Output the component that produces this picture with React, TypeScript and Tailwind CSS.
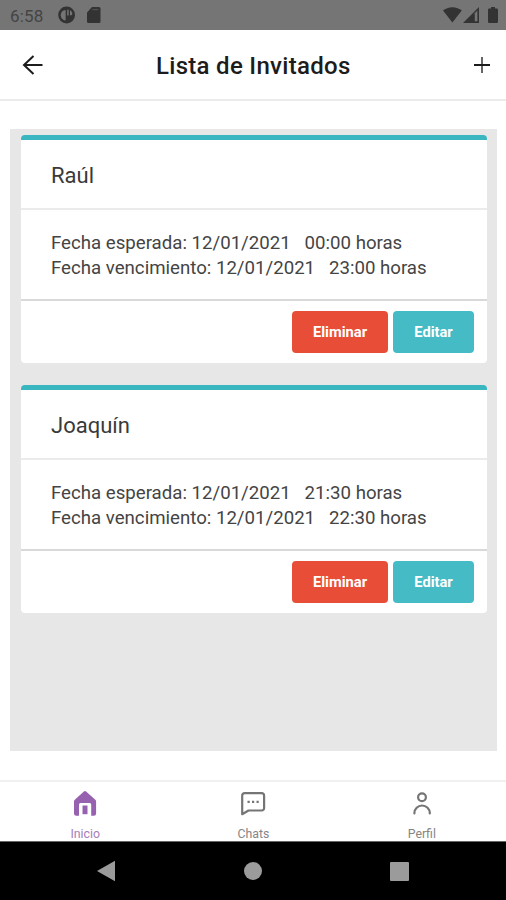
import React, { useState } from "react";

interface Guest {
  id: number;
  name: string;
  expected: { date: string; time: string };
  expires: { date: string; time: string };
}

const guests: Guest[] = [
  {
    id: 1,
    name: "Raúl",
    expected: { date: "12/01/2021", time: "00:00" },
    expires: { date: "12/01/2021", time: "23:00" },
  },
  {
    id: 2,
    name: "Joaquín",
    expected: { date: "12/01/2021", time: "21:30" },
    expires: { date: "12/01/2021", time: "22:30" },
  },
];

function StatusBar() {
  return (
    <div className="flex h-[30px] shrink-0 items-center bg-[#757575] pl-[10px] pr-[8px]">
      <span className="w-[47px] pt-px text-[17px] leading-[30px] tracking-[0.2px] text-[#444444]">
        6:58
      </span>
      <svg width="18" height="18" viewBox="0 0 18 18" className="ml-px">
        <circle cx="8.6" cy="9" r="8.4" fill="#333333" />
        <path d="M7.6 4v10.400C4.600 14.200 2.800 12 2.800 9.200S4.600 4.200 7.600 4z" fill="#757575" />
        <path d="M9.200 3.800h1.500v5.800H9.200zM12 4.300c1.500.7 2.300 2 2.300 3.400 0 1-.9 1.700-2.300 1.700z" fill="#757575" />
      </svg>
      <svg width="14" height="16" viewBox="0 0 14 16" className="ml-[11px]">
        <path d="M5 0h7a1.5 1.5 0 0 1 1.5 1.5v13A1.5 1.5 0 0 1 12 16H1.5A1.5 1.5 0 0 1 0 14.5V5.5z" fill="#333333" />
        <path d="M5.300 2.600h6" stroke="#505050" strokeWidth="1.200" />
      </svg>
      <div className="ml-auto flex items-center">
        <svg width="19" height="16" viewBox="0 0 19 16">
          <path d="M9.4 15.5 0 3.6C2.5 1.6 5.7.3 9.4.3s6.900 1.300 9.400 3.300z" fill="#333333" />
        </svg>
        <svg width="17" height="16" viewBox="0 0 17 16" className="ml-px">
          <path d="M0 16 16 0v16z" fill="#333333" />
          <path d="M11.800 6.200 14.400 3.600v10.600h-2.600z" fill="#757575" />
        </svg>
        <svg width="10" height="16" viewBox="0 0 10 16" className="ml-[8px]">
          <path d="M3 0h4v1.600h1.800A1.200 1.200 0 0 1 10 2.800v12A1.200 1.200 0 0 1 8.800 16H1.200A1.200 1.200 0 0 1 0 14.800v-12a1.200 1.200 0 0 1 1.200-1.200H3z" fill="#333333" />
        </svg>
      </div>
    </div>
  );
}

function Header() {
  return (
    <header className="flex h-[71px] shrink-0 items-center border-b-2 border-[#ebebeb] pl-[22px] pr-[15px] text-[#1c1c1c]">
      <button type="button" aria-label="Volver">
        <svg width="21" height="20" viewBox="0 0 21 20" fill="none" stroke="currentColor" strokeWidth="2">
          <path d="M20.500 10H2M11.500 1 2 10l9.500 9" />
        </svg>
      </button>
      <h1 className="ml-[113px] mr-auto pt-[3px] text-[24px] font-medium leading-[30px] tracking-[0.3px]">
        Lista de Invitados
      </h1>
      <button type="button" aria-label="Agregar">
        <svg width="18" height="18" viewBox="0 0 18 18" fill="none" stroke="currentColor">
          <path d="M9 1v16" strokeWidth="2" stroke="#666666" />
          <path d="M1 9h16" strokeWidth="2" />
        </svg>
      </button>
    </header>
  );
}

function GuestCard({ guest }: { guest: Guest }) {
  return (
    <article className="flex h-[228px] flex-col overflow-hidden rounded-[4px] border-t-[5px] border-[#3ab6c0] bg-white">
      <h2 className="flex h-[70px] items-center border-b-2 border-[#ebebeb] pl-[30px] pt-[3px] text-[22px] text-[#3a3a3a]">
        {guest.name}
      </h2>
      <div className="flex h-[91px] flex-col justify-center whitespace-pre border-b-2 border-[#d9d9d9] pl-[30px] pt-[2px] text-[18.65px] leading-[25px] text-[#444444]">
        <p>{`Fecha esperada: ${guest.expected.date}   ${guest.expected.time} horas`}</p>
        <p>{`Fecha vencimiento: ${guest.expires.date}   ${guest.expires.time} horas`}</p>
      </div>
      <div className="flex flex-1 items-center justify-end gap-[5px] pr-[12.5px] text-[14.7px] font-bold text-white">
        <button type="button" className="h-[42px] w-[96px] rounded bg-[#e84e37]">
          Eliminar
        </button>
        <button type="button" className="h-[42px] w-[81px] rounded bg-[#44bbc5]">
          Editar
        </button>
      </div>
    </article>
  );
}

const tabs = [
  {
    id: "inicio",
    label: "Inicio",
    icon: (
      <svg width="26" height="26" viewBox="0 0 26 26">
        <path
          d="M13 0a1.500 1.500 0 0 1 1.100.5l9.200 8.300c.5.500.8 1.100.8 1.800v11.900a2.200 2.200 0 0 1-2.200 2.200h-2.700V13.500a1.500 1.500 0 0 0-1.500-1.500H8.500A1.500 1.500 0 0 0 7 13.500v11.200H4.200A2.200 2.200 0 0 1 2 22.500V10.600c0-.7.3-1.300.8-1.800L11.900.5A1.500 1.500 0 0 1 13 0z"
          fill="#9661ae"
        />
        <path d="M10.500 14.500h5v8.700h-5z" fill="#9661ae" />
      </svg>
    ),
  },
  {
    id: "chats",
    label: "Chats",
    icon: (
      <svg width="26" height="26" viewBox="0 0 26 26" fill="none" stroke="#757575">
        <path
          d="M4.500 2.200h17.300a2.300 2.300 0 0 1 2.300 2.300v12.700a2.300 2.300 0 0 1-2.300 2.300H8.500L2.200 23.200V4.500a2.300 2.300 0 0 1 2.300-2.300z"
          strokeWidth="2.200"
          strokeLinejoin="round"
        />
        <path d="M7.500 10.800h2.200M12 10.800h2.200M16.500 10.800h2.200" strokeWidth="2.200" />
      </svg>
    ),
  },
  {
    id: "perfil",
    label: "Perfil",
    icon: (
      <svg width="26" height="26" viewBox="0 0 26 26" fill="none" stroke="#757575" strokeWidth="2.200">
        <circle cx="13" cy="6.300" r="3.900" />
        <path d="M5.400 22.500v-.5a7.700 7.500 0 0 1 15.400 0v.5" strokeLinecap="round" />
      </svg>
    ),
  },
];

function TabBar() {
  const [active, setActive] = useState("inicio");

  return (
    <nav className="grid h-[61px] shrink-0 grid-cols-3 border-t-2 border-[#f0f0f0] pl-px">
      {tabs.map((tab) => (
        <button
          key={tab.id}
          type="button"
          onClick={() => setActive(tab.id)}
          className={`flex flex-col items-center pt-[9px] text-[12.3px] leading-[16px] ${
            active === tab.id ? "text-[#a57dba]" : "text-[#858585]"
          }`}
        >
          {tab.icon}
          <span className="mt-[9px]">{tab.label}</span>
        </button>
      ))}
    </nav>
  );
}

function SystemNav() {
  return (
    <div className="flex h-[59px] shrink-0 items-center justify-between border-t border-[#666666] bg-black px-[97px]">
      <svg width="18" height="22" viewBox="0 0 18 22">
        <path d="M0 11 18 .7v20.600z" fill="#9b9b9b" />
      </svg>
      <div className="h-[18px] w-[18px] rounded-full bg-[#9b9b9b]" />
      <div className="h-[19px] w-[19px] rounded-[1px] bg-[#9b9b9b]" />
    </div>
  );
}

export default function App() {
  return (
    <div className="flex h-[900px] w-[506px] flex-col overflow-hidden bg-white font-['Roboto',sans-serif]">
      <StatusBar />
      <Header />

      {/* Guest list */}
      <main className="mb-[29px] ml-[10px] mr-[9px] mt-[28px] flex flex-1 flex-col gap-[22px] bg-[#e7e7e7] pl-[11px] pr-[10.5px] pt-[6px]">
        {guests.map((guest) => (
          <GuestCard key={guest.id} guest={guest} />
        ))}
      </main>

      <TabBar />
      <SystemNav />
    </div>
  );
}
